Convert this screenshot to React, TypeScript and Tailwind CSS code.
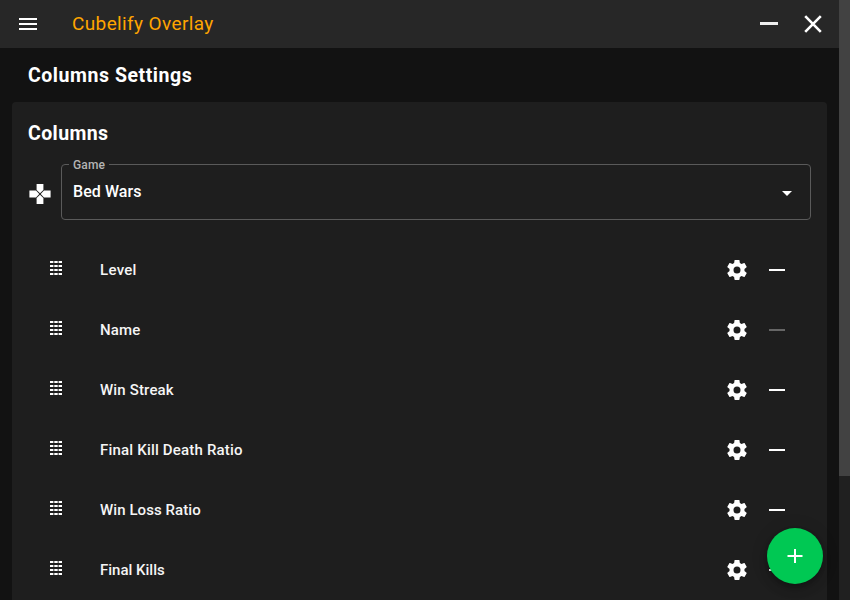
import React from "react";

type Column = { label: string; removable: boolean; tracking: string };

const columns: Column[] = [
  { label: "Level", removable: true, tracking: "tracking-[0.3px]" },
  { label: "Name", removable: false, tracking: "tracking-[0.12px]" },
  { label: "Win Streak", removable: true, tracking: "tracking-[0.15px]" },
  { label: "Final Kill Death Ratio", removable: true, tracking: "tracking-[0.19px]" },
  { label: "Win Loss Ratio", removable: true, tracking: "tracking-[0.07px]" },
  { label: "Final Kills", removable: true, tracking: "tracking-[0px]" },
];

function Icon({ d, className = "size-6" }: { d: string; className?: string }) {
  return (
    <svg viewBox="0 0 24 24" fill="currentColor" className={className}>
      <path d={d} />
    </svg>
  );
}

const GEAR =
  "M12,15.5A3.5,3.5 0 0,1 8.5,12A3.5,3.5 0 0,1 12,8.5A3.5,3.5 0 0,1 15.5,12A3.5,3.5 0 0,1 12,15.5M19.43,12.97C19.47,12.65 19.5,12.33 19.5,12C19.5,11.67 19.47,11.34 19.43,11L21.54,9.37C21.73,9.22 21.78,8.95 21.66,8.73L19.66,5.27C19.54,5.05 19.27,4.96 19.05,5.05L16.56,6.05C16.04,5.66 15.5,5.32 14.87,5.07L14.5,2.42C14.46,2.18 14.25,2 14,2H10C9.75,2 9.54,2.18 9.5,2.42L9.13,5.07C8.5,5.32 7.96,5.66 7.44,6.05L4.95,5.05C4.73,4.96 4.46,5.05 4.34,5.27L2.34,8.73C2.21,8.95 2.27,9.22 2.46,9.37L4.57,11C4.53,11.34 4.5,11.67 4.5,12C4.5,12.33 4.53,12.65 4.57,12.97L2.46,14.63C2.27,14.78 2.21,15.05 2.34,15.27L4.34,18.73C4.46,18.95 4.73,19.03 4.95,18.95L7.44,17.94C7.96,18.34 8.5,18.68 9.13,18.93L9.5,21.58C9.54,21.82 9.75,22 10,22H14C14.25,22 14.46,21.82 14.5,21.58L14.87,18.93C15.5,18.67 16.04,18.34 16.56,17.94L19.05,18.95C19.27,19.03 19.54,18.95 19.66,18.73L21.66,15.27C21.78,15.05 21.73,14.78 21.54,14.63L19.43,12.97Z";

const GAMEPAD =
  "M16,8.6L12.7,12L16,15.4H22.6V8.6ZM8.6,16V22H15.4V16L12,12.7ZM8,8.6H1.4V15.4H8L11.3,12ZM15.4,8V2H8.6V8L12,11.3Z";

function Grip() {
  return (
    <svg width="12" height="14" viewBox="0 0 12 14" fill="#fff">
      {[0, 4, 8, 12].map((y) => [0, 4.3, 8.6].map((x) => <rect key={`${x}-${y}`} x={x} y={y} width="3.4" height="2" />))}
    </svg>
  );
}

export default function App() {
  return (
    <div className="flex h-[600px] w-[850px] overflow-hidden bg-[#121212] font-['Roboto',sans-serif] whitespace-nowrap text-white">
      <div className="relative flex min-w-0 flex-1 flex-col">
        <header className="flex h-12 shrink-0 items-center bg-[#272727] pr-[17px] pl-4">
          <Icon d="M3,6H21V8H3V6M3,11H21V13H3V11M3,16H21V18H3V16Z" />
          <span className="ml-8 flex-1 text-[19px] leading-6 tracking-[0.38px] text-[#ffa500]">Cubelify Overlay</span>
          <div className="mr-[26px] mb-px h-[3px] w-[18px] bg-[#eeeeee]" />
          <svg width="18" height="18" viewBox="0 0 18 18" stroke="white" strokeWidth="2.6">
            <path d="M1.2 1.2l15.6 15.6M16.8 1.2l-15.6 15.6" />
          </svg>
        </header>
        <h1 className="h-[54px] shrink-0 pt-4 pl-7 text-[19.5px] leading-6 font-bold tracking-[0.55px]">Columns Settings</h1>
        <main className="mx-3 h-[498px] shrink-0 rounded-t bg-[#1e1e1e] px-4">
          <h2 className="h-[62px] pt-5 text-[19.5px] leading-6 font-bold tracking-[0.4px]">Columns</h2>
          <div className="flex h-14 items-center">
            <Icon d={GAMEPAD} className="mt-1 size-6" />
            <div className="relative ml-[9px] flex h-14 w-[750px] items-start rounded border border-[#5a5a5a] pl-[11px]">
              <span className="absolute -top-2 left-[7px] bg-[#1e1e1e] px-1 text-xs leading-4 font-medium tracking-[0.15px] text-[#b4b4b4]">Game</span>
              <span className="flex-1 pt-[15px] text-base leading-6 font-medium tracking-[0.07px]">Bed Wars</span>
              <Icon d="M7,10L12,15L17,10H7Z" className="mt-4 mr-[11px] size-6" />
            </div>
          </div>
          <ul className="pt-5">
            {columns.map((column) => (
              <li key={column.label} className="flex h-[60px] items-center pr-[26px] pl-[22px]">
                <div className="-mt-1 w-[50px]">
                  <Grip />
                </div>
                <span className={`flex-1 text-[15px] leading-6 font-medium text-[#f5f5f5] ${column.tracking}`}>{column.label}</span>
                <Icon d={GEAR} />
                <div className={`ml-5 h-[2px] w-4 ${column.removable ? "bg-white" : "bg-[#666666]"}`} />
              </li>
            ))}
          </ul>
        </main>
        <button className="absolute right-4 bottom-4 flex size-14 items-center justify-center rounded-full bg-[#00c853] shadow-[0_3px_5px_-1px_rgba(0,0,0,.2),0_6px_10px_rgba(0,0,0,.14),0_1px_18px_rgba(0,0,0,.12)]">
          <Icon d="M19.5,13H13V19H11V13H4.5V11H11V5H13V11H19.5V13Z" />
        </button>
      </div>
      <div className="w-[11px] bg-[#202020]">
        <div className="h-[476px] bg-[#424242]" />
      </div>
    </div>
  );
}
